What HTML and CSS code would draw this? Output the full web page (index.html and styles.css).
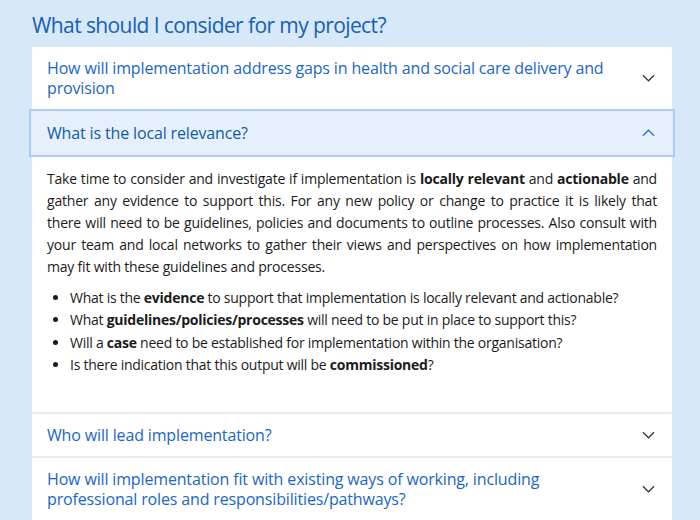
FILE: index.html
```html
<!DOCTYPE html>
<html>
<head>
<meta charset="utf-8">
<link rel="stylesheet" href="styles.css">
</head>
<body>
<h1 class="title">What should I consider for my project?</h1>
<div class="panel">
  <div class="item">
    <span class="q">How will implementation address gaps in health and social care delivery and provision</span>
    <svg class="chev" viewBox="0 0 14 8"><path d="M1 1l6 6 6-6"/></svg>
  </div>
  <div class="item open">
    <span class="q">What is the local relevance?</span>
    <svg class="chev up" viewBox="0 0 14 8"><path d="M1 7l6-6 6 6"/></svg>
  </div>
  <div class="content">
    <p>Take time to consider and investigate if implementation is <b>locally relevant</b> and <b>actionable</b> and gather any evidence to support this. For any new policy or change to practice it is likely that there will need to be guidelines, policies and documents to outline processes. Also consult with your team and local networks to gather their views and perspectives on how implementation may fit with these guidelines and processes.</p>
    <ul>
      <li>What is the <b>evidence</b> to support that implementation is locally relevant and actionable?</li>
      <li>What <b>guidelines/policies/processes</b> will need to be put in place to support this?</li>
      <li>Will a <b>case</b> need to be established for implementation within the organisation?</li>
      <li>Is there indication that this output will be <b>commissioned</b>?</li>
    </ul>
  </div>
  <div class="item sep">
    <span class="q">Who will lead implementation?</span>
    <svg class="chev" viewBox="0 0 14 8"><path d="M1 1l6 6 6-6"/></svg>
  </div>
  <div class="item sep">
    <span class="q">How will implementation fit with existing ways of working, including professional roles and responsibilities/pathways?</span>
    <svg class="chev" viewBox="0 0 14 8"><path d="M1 1l6 6 6-6"/></svg>
  </div>
</div>
</body>
</html>
```
FILE: styles.css
```css
html, body {
  margin: 0;
  padding: 0;
  background: #d7e8f9;
  font-family: "Open Sans", "Noto Sans", sans-serif;
  overflow: hidden;
  height: 520px;
}
.title {
  margin: 0;
  padding: 10px 0 0 32px;
  height: 38px;
  box-sizing: border-box;
  font-size: 21px;
  line-height: 30px;
  font-weight: 400;
  color: #1660b8;
  letter-spacing: -0.6px;
}
.panel {
  margin: 9px 28px 0 32px;
  background: #fff;
}
.item {
  display: flex;
  align-items: center;
  justify-content: space-between;
  padding: 11px 17px 11px 15px;
  font-size: 16px;
  line-height: 20px;
  color: #1a66c6;
}
.item .q {
  max-width: 570px;
  letter-spacing: -0.15px;
}
.chev {
  width: 13px;
  height: 8px;
  flex: none;
  fill: none;
  stroke: #333;
  stroke-width: 1.3;
}
.chev.up {
  stroke: #2e6fd0;
}
.item.open {
  margin: 0 -3px;
  padding: 12px 18px 12px 16px;
  background: #e6f0fc;
  border: 2px solid #aacdf6;
  color: #0e5ba6;
}
.item.sep {
  border-top: 2px solid #e9ebee;
}
.content {
  padding: 11px 15px 35px 15px;
  font-size: 14px;
  line-height: 22px;
  color: #1b1b1b;
}
.content p {
  margin: 0;
  text-align: justify;
  letter-spacing: -0.2px;
}
.content b {
  font-weight: 700;
}
.content ul {
  margin: 9px 0 0 0;
  padding-left: 23px;
}
.content li {
  line-height: 22.4px;
  letter-spacing: -0.25px;
}
```
